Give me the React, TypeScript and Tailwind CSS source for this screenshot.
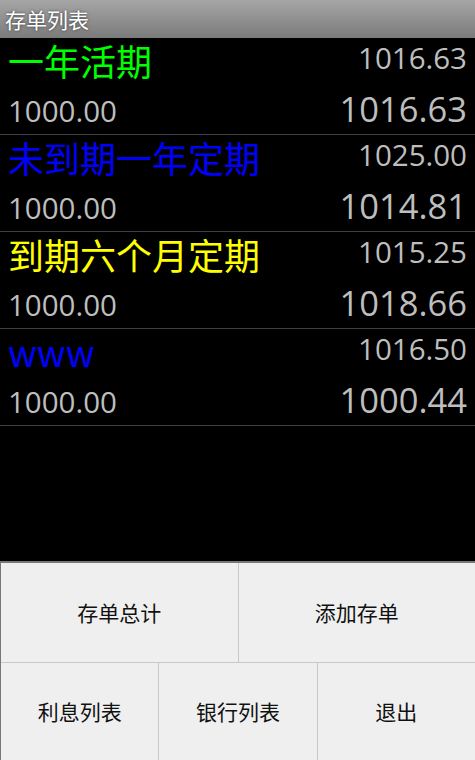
const cjk = "font-['Noto_Sans_CJK_SC',sans-serif]";
const num = "font-['Open_Sans','Noto_Sans_CJK_SC',sans-serif]";

interface Deposit {
  name: string;
  color: string;
  total: string;
  principal: string;
  interest: string;
}

const deposits: Deposit[] = [
  { name: "一年活期", color: "text-[#00ff00]", total: "1016.63", principal: "1000.00", interest: "1016.63" },
  { name: "未到期一年定期", color: "text-[#0000ff]", total: "1025.00", principal: "1000.00", interest: "1014.81" },
  { name: "到期六个月定期", color: "text-[#ffff00]", total: "1015.25", principal: "1000.00", interest: "1018.66" },
  { name: "www", color: "text-[#0000ff]", total: "1016.50", principal: "1000.00", interest: "1000.44" },
];

const DepositRow = ({ d }: { d: Deposit }) => (
  <div className="h-[97px] border-b border-[#3f3f3f] px-2">
    <div className="flex h-[54px] items-start justify-between">
      <div className={`${cjk} ${d.color} mt-[4px] text-[36px] leading-[36px]`}>{d.name}</div>
      <div className={`${num} mt-[5px] text-[29.5px] leading-[29px] text-[#bebebe]`}>{d.total}</div>
    </div>
    <div className="flex items-baseline justify-between">
      <div className={`${num} text-[29.5px] leading-[29px] text-[#bebebe]`}>{d.principal}</div>
      <div className={`${num} text-[34.5px] leading-[34px] text-[#bebebe]`}>{d.interest}</div>
    </div>
  </div>
);

const MenuButton = ({ label, last }: { label: string; last?: boolean }) => (
  <div
    className={`flex flex-1 items-center justify-center ${cjk} text-[21px] text-[#111] ${last ? "" : "border-r border-[#c8c8c8]"}`}
  >
    {label}
  </div>
);

export default function App() {
  return (
    <div className="flex h-[760px] w-[475px] flex-col overflow-hidden bg-black">
      <div className="flex h-[38px] items-center bg-gradient-to-b from-[#a6a6a6] to-[#7b7b7b] px-[5px]">
        <span className={`${cjk} text-[21px] leading-none text-white [text-shadow:0_0_3px_rgba(0,0,0,0.6)]`}>
          存单列表
        </span>
      </div>

      <div className="flex-1">
        {deposits.map((d, i) => (
          <DepositRow key={i} d={d} />
        ))}
      </div>

      <div className="border-t-2 border-l border-[#777] bg-[#efefef]">
        <div className="flex h-[100px] border-b border-[#c8c8c8]">
          <MenuButton label="存单总计" />
          <MenuButton label="添加存单" last />
        </div>
        <div className="flex h-[97px]">
          <MenuButton label="利息列表" />
          <MenuButton label="银行列表" />
          <MenuButton label="退出" last />
        </div>
      </div>
    </div>
  );
}
